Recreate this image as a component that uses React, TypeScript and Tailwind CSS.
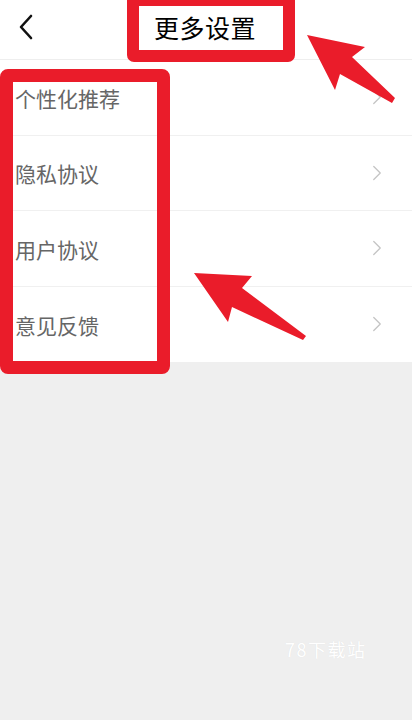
import { ChevronRight } from "lucide-react";

const items = ["个性化推荐", "隐私协议", "用户协议", "意见反馈"];

const font = { fontFamily: '"Noto Sans CJK SC", "Noto Sans", sans-serif' };

function BackIcon() {
  return (
    <svg width="16" height="28" viewBox="0 0 16 28" fill="none">
      <path d="M13 3 L3 14 L13 25" stroke="#111" strokeWidth="2.6" strokeLinecap="round" strokeLinejoin="round" />
    </svg>
  );
}

export default function App() {
  return (
    <div className="relative w-[412px] h-[720px] overflow-hidden bg-[#efefef] font-['Noto_Sans_CJK_SC',sans-serif]">
      {/* header */}
      <div className="h-[60px] bg-white border-b border-[#eeeeee] flex items-center relative">
        <div className="pl-[18px] -mt-[6px]">
          <BackIcon />
        </div>
        <div className="absolute left-0 right-0 top-0 h-[56px] flex items-center justify-center pointer-events-none">
          <span className="text-[25px] text-black tracking-[0.5px] ml-[-2px]">更多设置</span>
        </div>
      </div>

      {/* list */}
      <div className="bg-white">
        {items.map((label, i) => (
          <div
            key={label}
            className={`h-[75.5px] flex items-center justify-between pl-[15px] pr-[22px] ${i < items.length - 1 ? "border-b border-[#f0f0f0]" : ""}`}
          >
            <span className="text-[21px] text-[#666666] leading-none mt-[2px]">{label}</span>
            <ChevronRight size={26} strokeWidth={1.2} color="#c4c4c4" />
          </div>
        ))}
      </div>

      {/* watermark */}
      <div className="absolute left-[285px] top-[636px] text-[18px] text-white tracking-[1.5px] [text-shadow:0_0_1px_rgba(0,0,0,0.08)]" style={font}>
        78下载站
      </div>

      {/* annotation boxes */}
      <div className="absolute left-[127px] top-[-6px] w-[168px] h-[68px] border-[12px] border-[#ea1c2a] rounded-[7px]" />
      <div className="absolute left-[0px] top-[69px] w-[170px] h-[305px] border-[13px] border-[#ea1c2a] rounded-[8px]" />

      {/* annotation arrows */}
      <svg className="absolute left-0 top-0" width="412" height="720" viewBox="0 0 412 720">
        <polygon
          points="307,35 365,47 352,57 395,98 392,103 340,74 335,90"
          fill="#ea1c2a"
        />
        <polygon
          points="194,273 252,276 242,288 306,336 303,340 232,307 228,322"
          fill="#ea1c2a"
        />
      </svg>
    </div>
  );
}
